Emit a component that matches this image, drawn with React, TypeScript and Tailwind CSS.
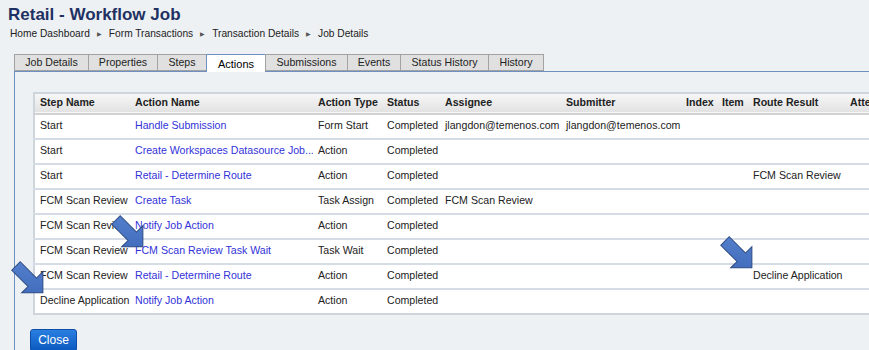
import React from 'react';

const tabs = [
  { label: 'Job Details', w: 'w-[75px]' },
  { label: 'Properties', w: 'w-[70px]' },
  { label: 'Steps', w: 'w-[50px]' },
  { label: 'Actions', w: 'w-[60px]', active: true },
  { label: 'Submissions', w: 'w-[83px]' },
  { label: 'Events', w: 'w-[54px]' },
  { label: 'Status History', w: 'w-[89px]' },
  { label: 'History', w: 'w-[56px]' },
];

const columns = [
  { label: 'Step Name', w: 'w-[96px]' },
  { label: 'Action Name', w: 'w-[183px]' },
  { label: 'Action Type', w: 'w-[69px]' },
  { label: 'Status', w: 'w-[58px]' },
  { label: 'Assignee', w: 'w-[121px]' },
  { label: 'Submitter', w: 'w-[120px]' },
  { label: 'Index', w: 'w-[36px]' },
  { label: 'Item', w: 'w-[31px]' },
  { label: 'Route Result', w: 'w-[97px]' },
  { label: 'Attempts', w: 'w-[80px]' },
];

const rows = [
  ['Start', 'Handle Submission', 'Form Start', 'Completed', 'jlangdon@temenos.com', 'jlangdon@temenos.com', '', '', '', ''],
  ['Start', 'Create Workspaces Datasource Job...', 'Action', 'Completed', '', '', '', '', '', ''],
  ['Start', 'Retail - Determine Route', 'Action', 'Completed', '', '', '', '', 'FCM Scan Review', ''],
  ['FCM Scan Review', 'Create Task', 'Task Assign', 'Completed', 'FCM Scan Review', '', '', '', '', ''],
  ['FCM Scan Review', 'Notify Job Action', 'Action', 'Completed', '', '', '', '', '', ''],
  ['FCM Scan Review', 'FCM Scan Review Task Wait', 'Task Wait', 'Completed', '', '', '', '', '', ''],
  ['FCM Scan Review', 'Retail - Determine Route', 'Action', 'Completed', '', '', '', '', 'Decline Application', ''],
  ['Decline Application', 'Notify Job Action', 'Action', 'Completed', '', '', '', '', '', ''],
];

const Crumb = () => (
  <span className="mx-[7px] inline-block text-[6px] text-[#555] align-middle">&#9654;</span>
);

const Arrow = ({ className }: { className: string }) => (
  <svg className={`absolute ${className}`} width="34" height="34" viewBox="0 0 34 34">
    <defs>
      <linearGradient id="arrowFill" x1="0" y1="0" x2="1" y2="1">
        <stop offset="0" stopColor="#5682cf" />
        <stop offset="1" stopColor="#3d68b8" />
      </linearGradient>
    </defs>
    <g transform="translate(5 5) rotate(45)">
      <polygon
        points="0,-6 23,-6 23,-15 38,0 23,15 23,6 0,6"
        fill="url(#arrowFill)"
        stroke="#2c4a82"
        strokeWidth="1"
        strokeLinejoin="miter"
      />
    </g>
  </svg>
);

export default function App() {
  return (
    <div
      className="relative w-[869px] h-[350px] overflow-hidden bg-[#eef1f3] text-[#222]"
      style={{ fontFamily: '"Liberation Sans", Arial, sans-serif' }}
    >
      <div className="pl-[8px] pt-[4px]">
        <h1 className="text-[17px] font-bold leading-[22px] text-[#1f3163]">Retail - Workflow Job</h1>
        <div className="pl-[2px] mt-[1px] text-[10.2px] leading-[13px] text-[#222]">
          Home Dashboard<Crumb />Form Transactions<Crumb />Transaction Details<Crumb />Job Details
        </div>
      </div>

      <div className="ml-[14px] mt-[13px] flex items-end relative z-10">
        {tabs.map((t) =>
          t.active ? (
            <div
              key={t.label}
              className={`${t.w} h-[18px] -mb-px -mr-px bg-white border border-b-0 border-[#6f8fc0] text-center text-[11px] leading-[19px] text-black`}
            >
              {t.label}
            </div>
          ) : (
            <div
              key={t.label}
              className={`${t.w} h-[17px] -mr-px bg-[#e0e0e0] border border-[#a2a2a2] text-center text-[10.6px] leading-[15px] text-[#222]`}
            >
              {t.label}
            </div>
          )
        )}
      </div>

      <div className="ml-[14px] border-l border-t border-[#6f8fc0] pl-[18px] pt-[20px] pb-[14px]">
        <table className="table-fixed border-collapse text-[10.6px] w-[891px] bg-white border-l-2 border-t-2 border-b-2 border-[#cfd5dc]">
          <thead>
            <tr className="h-[21px] bg-gradient-to-b from-[#f8f8f8] to-[#e2e2e2] border-b-2 border-[#d2d2d2]">
              {columns.map((c) => (
                <th key={c.label} className={`${c.w} px-[5px] text-left font-bold whitespace-nowrap overflow-hidden`}>
                  {c.label}
                </th>
              ))}
            </tr>
          </thead>
          <tbody>
            {rows.map((r, i) => (
              <tr key={i} className={`h-[25px] ${i < rows.length - 1 ? 'border-b-2 border-[#d5dce5]' : ''}`}>
                {r.map((cell, j) => (
                  <td
                    key={j}
                    className={`px-[5px] whitespace-nowrap overflow-hidden ${j === 1 ? 'text-[#3232d8]' : 'text-[#222]'}`}
                  >
                    {cell}
                  </td>
                ))}
              </tr>
            ))}
          </tbody>
        </table>

        <button className="-ml-[3px] mt-[14px] h-[23px] w-[47px] rounded-[3px] border border-[#0b4ea8] bg-gradient-to-b from-[#2a7fe0] to-[#0a58c0] text-white text-[12px] leading-[20px]">
          Close
        </button>
      </div>

      <Arrow className="left-[111px] top-[215px]" />
      <Arrow className="left-[11px] top-[261px]" />
      <Arrow className="left-[720px] top-[236px]" />
    </div>
  );
}
